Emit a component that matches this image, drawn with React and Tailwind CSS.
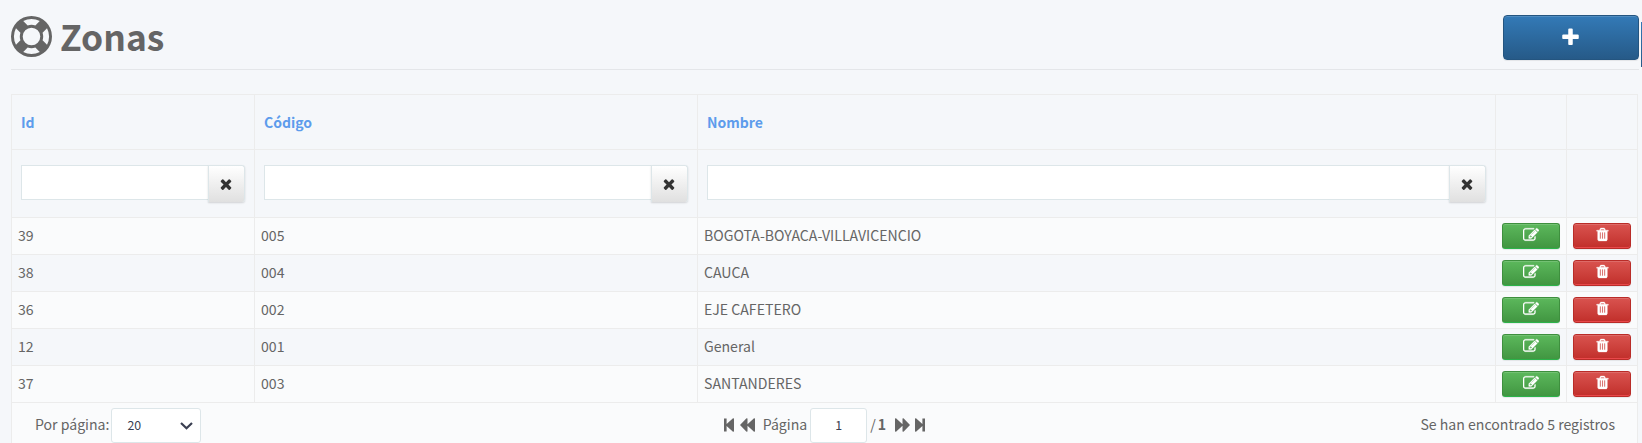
const paths = {
  ring: "M896 0q182 0 348 71t286 191 191 286 71 348-71 348-191 286-286 191-348 71-348-71-286-191-191-286-71-348 71-348 191-286 286-191 348-71zm0 128q-190 0-361 90l194 194q82-28 167-28t167 28l194-194q-171-90-361-90zm-678 1129l194-194q-28-82-28-167t28-167l-194-194q-90 171-90 361t90 361zm678 407q190 0 361-90l-194-194q-82 28-167 28t-167-28l-194 194q171 90 361 90zm0-384q159 0 271.500-112.500t112.500-271.500-112.500-271.500-271.500-112.500-271.500 112.500-112.500 271.500 112.500 271.500 271.500 112.500zm484-217l194 194q90-171 90-361t-90-361l-194 194q28 82 28 167t-28 167z",
  plus: "M1600 736v192q0 40-28 68t-68 28h-416v416q0 40-28 68t-68 28h-192q-40 0-68-28t-28-68v-416h-416q-40 0-68-28t-28-68v-192q0-40 28-68t68-28h416v-416q0-40 28-68t68-28h192q40 0 68 28t28 68v416h416q40 0 68 28t28 68z",
  times: "M1490 1322q0 40-28 68l-136 136q-28 28-68 28t-68-28l-294-294-294 294q-28 28-68 28t-68-28l-136-136q-28-28-28-68t28-68l294-294-294-294q-28-28-28-68t28-68l136-136q28-28 68-28t68 28l294 294 294-294q28-28 68-28t68 28l136 136q28 28 28 68t-28 68l-294 294 294 294q28 28 28 68z",
  edit: "M888 1184l116-116-152-152-116 116v56h96v96h56zm440-720q-16-16-33 1l-350 350q-17 17-1 33t33-1l350-350q17-17 1-33zm80 594v190q0 119-84.500 203.500t-203.500 84.500h-832q-119 0-203.500-84.500t-84.500-203.500v-832q0-119 84.500-203.500t203.500-84.500h832q63 0 117 25 15 7 18 23 3 17-9 29l-49 49q-14 14-32 8-23-6-45-6h-832q-66 0-113 47t-47 113v832q0 66 47 113t113 47h832q66 0 113-47t47-113v-126q0-13 9-22l64-64q15-15 35-7t20 29zm-96-738l288 288-672 672h-288v-288zm444 132l-92 92-288-288 92-92q28-28 68-28t68 28l152 152q28 28 28 68t-28 68z",
  trash: "M704 1376v-704q0-14-9-23t-23-9h-64q-14 0-23 9t-9 23v704q0 14 9 23t23 9h64q14 0 23-9t9-23zm256 0v-704q0-14-9-23t-23-9h-64q-14 0-23 9t-9 23v704q0 14 9 23t23 9h64q14 0 23-9t9-23zm256 0v-704q0-14-9-23t-23-9h-64q-14 0-23 9t-9 23v704q0 14 9 23t23 9h64q14 0 23-9t9-23zm-544-992h448l-48-117q-7-9-17-11h-317q-10 2-17 11zm928 32v64q0 14-9 23t-23 9h-96v948q0 83-47 143.500t-113 60.500h-832q-66 0-113-58.500t-47-141.500v-952h-96q-14 0-23-9t-9-23v-64q0-14 9-23t23-9h309l70-167q15-37 54-63t79-26h320q40 0 79 26t54 63l70 167h309q14 0 23 9t9 23z",
};

function Icon({ name, className }) {
  return (
    <svg viewBox="0 0 1792 1792" fill="currentColor" className={className}>
      <path d={paths[name]} />
    </svg>
  );
}

function StepIcon({ className = "" }) {
  return (
    <svg viewBox="0 0 10 14" fill="currentColor" className={"h-[14px] w-[10px] " + className}>
      <path d="M0 .5h2.600v5.600L9 .2 10 .5v13l-1 .3-6.400-5.900v5.600H0z" />
    </svg>
  );
}

function SkipIcon({ className = "" }) {
  return (
    <svg viewBox="0 0 15 14" fill="currentColor" className={"h-[14px] w-[15px] " + className}>
      <path d="M0 7 6.500.2l1 .3v5.700L14 .2l1 .3v13l-1 .3-6.500-6v5.700l-1 .3z" />
    </svg>
  );
}

function HeadCell({ children }) {
  return (
    <div className="flex items-center border-r border-b border-[#ececec] px-[9px] text-[14px] font-bold text-[#5d9cec]">
      {children}
    </div>
  );
}

function FilterCell() {
  return (
    <div className="flex items-start border-r border-b border-[#ececec] px-[9px] pt-[15px]">
      <input className="h-[35px] min-w-0 flex-1 border border-r-0 border-[#dde6e9] bg-white outline-none" />
      <button className="flex h-[37px] w-[37px] items-center justify-center rounded-r-[3px] border border-b-0 border-[#dde6e9] bg-linear-to-b from-white to-[#e0e0e0] pr-px pb-px text-[#333] shadow-[0_1px_2px_rgba(0,0,0,0.15)]">
        <Icon name="times" className="h-4 w-4" />
      </button>
    </div>
  );
}

const rows = [
  ["39", "005", "BOGOTA-BOYACA-VILLAVICENCIO"],
  ["38", "004", "CAUCA"],
  ["36", "002", "EJE CAFETERO"],
  ["12", "001", "General"],
  ["37", "003", "SANTANDERES"],
];

const cols = "grid grid-cols-[243px_443px_798px_71px_71px]";
const cell = "border-r border-b border-[#ececec]";

export default function App() {
  return (
    <div className="relative h-[443px] w-[1642px] overflow-hidden bg-[#f5f7fa] pl-[11px] font-['Noto_Sans_CJK_SC','Noto_Sans',sans-serif] text-[14.1px] text-[#656565]">
      <header className="flex h-[70px] w-[1628px] items-start justify-between border-b border-[#e4e6e9]">
        <h1 className="flex items-center pt-4 text-[35.4px] leading-[41px] font-bold">
          <Icon name="ring" className="mr-2 h-[41px] w-[41px]" />
          <span className="-mt-[2px]">Zonas</span>
        </h1>
        <button className="mt-[15px] flex h-[45px] w-[136px] items-center justify-center rounded-[4px] border border-[#245580] bg-linear-to-b from-[#337ab7] to-[#265a88] pr-px text-white shadow-[inset_0_1px_0_rgba(255,255,255,0.15),0_1px_1px_rgba(0,0,0,0.075)]">
          <Icon name="plus" className="h-[21px] w-[21px]" />
        </button>
      </header>
      <div className="absolute top-[22px] right-0 h-[45px] w-px bg-linear-to-b from-[#337ab7] to-[#265a88]" />

      <main className="mt-6 w-[1627px] border-t border-l border-[#ececec]">
        <div className={cols + " h-[55px]"}>
          <HeadCell>Id</HeadCell>
          <HeadCell>Código</HeadCell>
          <HeadCell>Nombre</HeadCell>
          <HeadCell />
          <HeadCell />
        </div>
        <div className={cols + " h-[68px]"}>
          <FilterCell />
          <FilterCell />
          <FilterCell />
          <div className={cell} />
          <div className={cell} />
        </div>
        {rows.map((r, i) => (
          <div key={r[0]} className={cols + " h-[37px] " + (i % 2 ? "bg-[#f5f7fa]" : "bg-[#fafbfc]")}>
            {r.map((t) => (
              <div key={t} className={cell + " flex items-center px-[6px]"}>{t}</div>
            ))}
            <div className={cell + " px-[6px] pt-[5px]"}>
              <button className="flex h-[26px] w-[58px] justify-center rounded-[3px] border border-[#3e8f3e] border-b-[#2cb34a] bg-linear-to-b from-[#5cb85c] to-[#419641] pt-[3px] text-white shadow-[inset_0_1px_0_rgba(255,255,255,0.15),0_1px_1px_rgba(0,0,0,0.075)]">
                <Icon name="edit" className="h-4 w-4 stroke-white stroke-[30]" />
              </button>
            </div>
            <div className={cell + " px-[6px] pt-[5px]"}>
              <button className="flex h-[26px] w-[58px] justify-center rounded-[3px] border border-[#b92c28] bg-linear-to-b from-[#d9534f] to-[#c12e2a] pt-[3px] text-white shadow-[inset_0_1px_0_rgba(255,255,255,0.15),inset_0_-1px_0_#e8484a,0_1px_1px_rgba(0,0,0,0.075)]">
                <Icon name="trash" className="h-[15px] w-[15px] stroke-white stroke-[40]" />
              </button>
            </div>
          </div>
        ))}
        <footer className="grid h-[60px] grid-cols-3 border-r border-[#ececec] bg-[#fafbfc] pt-[5px]">
          <div className="flex h-[35px] items-center pl-[23px]">
            <span className="pb-[2px]">Por página:</span>
            <div className="ml-[2px] flex h-[35px] w-[90px] items-center justify-between rounded-[3px] border border-[#dde6e9] bg-white pr-[7px] pl-[15px] text-[12.4px] text-[#3a3f51]">
              20
              <svg viewBox="0 0 13 8" className="h-2 w-[13px]" fill="none" stroke="currentColor" strokeWidth="2.2">
                <path d="M1 1l5.500 5.300L12 1" />
              </svg>
            </div>
          </div>
          <div className="flex h-[35px] items-center pl-[170px]">
            <StepIcon className="mb-[2px]" />
            <SkipIcon className="mb-[2px] ml-[6px]" />
            <span className="ml-2 pb-[2px]">Página</span>
            <div className="ml-[3px] flex h-[35px] w-[57px] items-center justify-center rounded-[3px] border border-[#dde6e9] bg-white text-[12.4px] text-[#3a3f51]">1</div>
            <span className="ml-[3px] pb-[2px]">/</span>
            <b className="ml-[2px] pb-[2px]">1</b>
            <SkipIcon className="mb-[2px] ml-[9px] rotate-180" />
            <StepIcon className="mb-[2px] ml-[5px] rotate-180" />
          </div>
          <div className="flex h-[35px] items-center justify-end pr-[22px] pb-[2px]">Se han encontrado 5 registros</div>
        </footer>
      </main>
    </div>
  );
}
